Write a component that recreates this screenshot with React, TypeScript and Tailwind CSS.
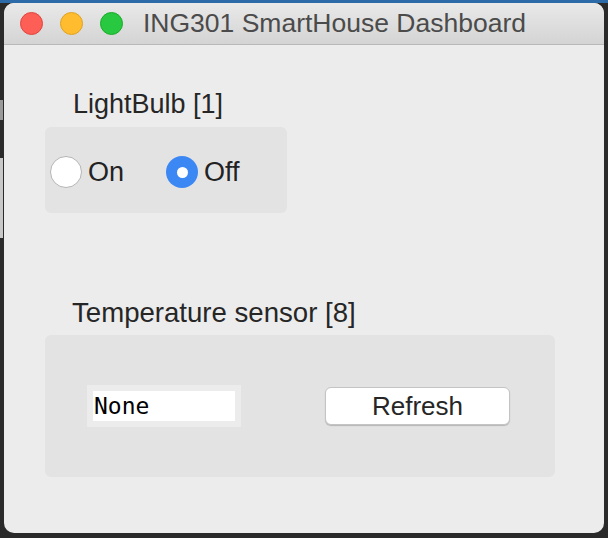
import React from "react";

const sans = { fontFamily: '"Liberation Sans", Arial, sans-serif' };

function TrafficLights() {
  return (
    <div className="flex items-center gap-[17px]">
      <span className="block w-[23px] h-[23px] rounded-full bg-[#fd5f57] border border-[#e0443e]" />
      <span className="block w-[23px] h-[23px] rounded-full bg-[#febc2e] border border-[#dea123]" />
      <span className="block w-[23px] h-[23px] rounded-full bg-[#28c840] border border-[#1aab29]" />
    </div>
  );
}

function Radio({ label, checked }: { label: string; checked?: boolean }) {
  return (
    <label className="flex items-center gap-[6px]">
      {checked ? (
        <span className="w-[32px] h-[32px] rounded-full bg-[#3b88f5] flex items-center justify-center">
          <span className="block w-[11px] h-[11px] rounded-full bg-white" />
        </span>
      ) : (
        <span className="w-[32px] h-[32px] rounded-full bg-white border border-[#b5b5b5]" />
      )}
      <span className="text-[27px] leading-[30px] text-[#222]">{label}</span>
    </label>
  );
}

export default function App() {
  return (
    <div className="w-[608px] h-[538px] bg-[#2a2a2a] relative overflow-hidden" style={sans}>
      {/* desktop behind the window */}
      <div className="h-[3px] bg-[#2c6aa8]" />
      <div className="absolute left-0 top-[100px] w-[3px] h-[20px] bg-[#9a9a9a]" />
      <div className="absolute left-0 top-[158px] w-[3px] h-[80px] bg-[#c8c8c8]" />

      {/* window */}
      <div className="ml-[4px] w-[600px] h-[530px] rounded-[10px] overflow-hidden bg-[#ececec] flex flex-col">
        <div className="h-[42px] flex items-center pl-[16px] gap-[20px] bg-gradient-to-b from-[#e9e9e9] to-[#d4d4d4] border-b border-[#b9b9b9] shrink-0">
          <TrafficLights />
          <span className="text-[26.5px] leading-none text-[#4b4b4b]">ING301 SmartHouse Dashboard</span>
        </div>

        <div className="pl-[41px] pt-[44px] flex flex-col">
          <div className="ml-[28px] text-[27px] leading-[30px] text-[#262626]">LightBulb [1]</div>
          <div className="mt-[8px] w-[242px] h-[86px] rounded-[6px] bg-[#e3e3e3] flex items-center pl-[5px] pt-[4px] gap-[42px]">
            <Radio label="On" />
            <Radio label="Off" checked />
          </div>

          <div className="mt-[85px] ml-[27px] text-[27.6px] leading-[30px] text-[#262626]">Temperature sensor [8]</div>
          <div className="mt-[7px] w-[510px] h-[142px] rounded-[6px] bg-[#e3e3e3] flex items-center pl-[42px]">
            <div className="p-[6px] bg-[#ececec]">
              <div className="w-[142px] h-[30px] bg-white flex items-center pl-[1px]">
                <span className="text-[23px] text-black" style={{ fontFamily: '"DejaVu Sans Mono", monospace' }}>None</span>
              </div>
            </div>
            <button className="ml-[84px] w-[185px] h-[38px] rounded-[6px] bg-white border border-[#c4c4c4] shadow-[0_1px_1px_rgba(0,0,0,0.2)] text-[26px] text-[#262626] leading-none">
              Refresh
            </button>
          </div>
        </div>
      </div>
    </div>
  );
}
